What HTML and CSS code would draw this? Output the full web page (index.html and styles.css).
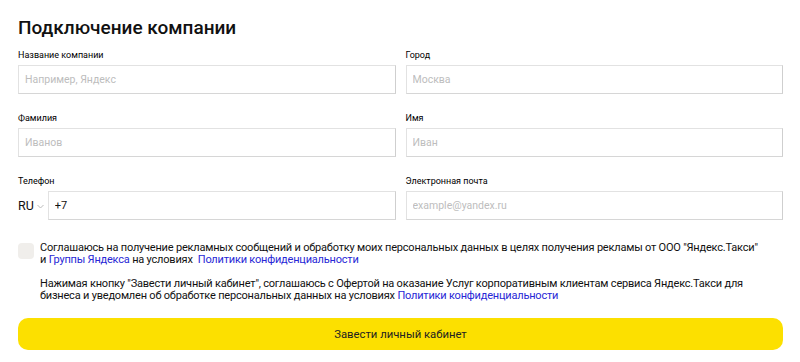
FILE: index.html
```html
<!DOCTYPE html>
<html>

<head>
    <title>Подключение компании</title>
    <meta charset="UTF-8">
    <link rel="stylesheet" href="styles.css">
</head>

<body>
    <h1>Подключение компании</h1>
    <form class="formulario">
        <div class="campos">
            <div class="campo">
                <label>Название компании</label>
                <input type="text" class="entrada" placeholder="Например, Яндекс">
            </div>
            <div class="campo">
                <label>Город</label>
                <input type="text" class="entrada" placeholder="Москва">
            </div>
            <div class="campo">
                <label>Фамилия</label>
                <input type="text" class="entrada" placeholder="Иванов">
            </div>
            <div class="campo">
                <label>Имя</label>
                <input type="text" class="entrada" placeholder="Иван">
            </div>
            <div class="campo">
                <label>Телефон</label>
                <div class="telefone">
                    <span class="pais">RU</span>
                    <svg class="seta" width="7" height="5" viewBox="0 0 7 5"><path d="M0.5 1L3.5 4L6.5 1" fill="none" stroke="#bbb" stroke-width="1"/></svg>
                    <input type="text" class="entrada" value="+7">
                </div>
            </div>
            <div class="campo">
                <label>Электронная почта</label>
                <input type="text" class="entrada" placeholder="example@yandex.ru">
            </div>
        </div>

        <div class="acordo">
            <span class="caixa"></span>
            <div class="textos">
                <p>Соглашаюсь на получение рекламных сообщений и обработку моих персональных данных в целях получения рекламы от ООО "Яндекс.Такси"<br>и <a href="#">Группы Яндекса</a> на условиях&nbsp; <a href="#">Политики конфиденциальности</a></p>
                <p class="aviso">Нажимая кнопку "Завести личный кабинет", соглашаюсь с Офертой на оказание Услуг корпоративным клиентам сервиса Яндекс.Такси для бизнеса и уведомлен об обработке персональных данных на условиях <a href="#">Политики конфиденциальности</a></p>
            </div>
        </div>

        <button type="button" class="botao">Завести личный кабинет</button>
    </form>
</body>

</html>
```

FILE: styles.css
```css
* {
    margin: 0;
    padding: 0;
    box-sizing: border-box;
}

body {
    font-family: Roboto, "Noto Sans", sans-serif;
    color: #000;
    background: #fff;
    padding: 17px 17px 0 18px;
}

h1 {
    font-size: 19px;
    line-height: 22px;
    font-weight: 500;
    color: #111;
}

.formulario {
    margin-top: 10px;
}

.campos {
    display: grid;
    grid-template-columns: 1fr 1fr;
    column-gap: 10px;
    row-gap: 18px;
}

.campo label {
    display: block;
    font-size: 9px;
    line-height: 12px;
    margin-bottom: 4px;
    color: #000;
}

.entrada {
    display: block;
    width: 100%;
    height: 29px;
    border: 1px solid #e2e2e2;
    border-right-color: #cfcfcf;
    border-bottom-color: #d6d6d6;
    padding: 0 10px 0 6px;
    font-family: Roboto, "Noto Sans", sans-serif;
    font-size: 10.5px;
    color: #111;
    outline: none;
}

.entrada::placeholder {
    color: #bdbdbd;
}

.telefone {
    display: flex;
    align-items: center;
}

.pais {
    font-size: 12.5px;
    color: #111;
}

.seta {
    margin: 1px 4px 0 3px;
}

.telefone .entrada {
    flex: 1;
    font-size: 11px;
}

.acordo {
    display: flex;
    gap: 6px;
    margin-top: 22px;
}

.caixa {
    flex: none;
    width: 16px;
    height: 16px;
    margin-top: 1px;
    border-radius: 4px;
    background: #f0eeeb;
}

.textos p {
    font-size: 11px;
    letter-spacing: -0.2px;
    line-height: 12px;
    color: #111;
}

.textos .aviso {
    margin-top: 12px;
}

a {
    color: #2727d6;
    text-decoration: none;
}

.botao {
    display: block;
    width: 100%;
    height: 32px;
    margin-top: 16px;
    border: none;
    border-radius: 10px;
    background: #fce000;
    font-family: Roboto, "Noto Sans", sans-serif;
    font-size: 11.3px;
    color: #222;
}
```
